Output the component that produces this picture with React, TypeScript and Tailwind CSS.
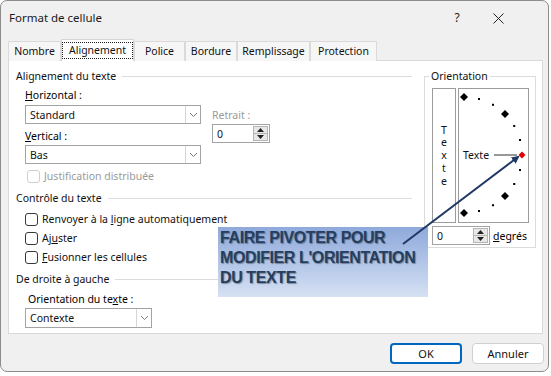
import React from "react";

const tabs = [
  { label: "Nombre", w: "w-[53px]" },
  { label: "Alignement", w: "w-[73px]", active: true },
  { label: "Police", w: "w-[51px]" },
  { label: "Bordure", w: "w-[52px]" },
  { label: "Remplissage", w: "w-[73px]" },
  { label: "Protection", w: "w-[67px]" },
];

function Chevron() {
  return (
    <svg width="9" height="6" viewBox="0 0 9 6">
      <path d="M1 1l3.5 3.5L8 1" fill="none" stroke="#7a7a7a" strokeWidth="1" />
    </svg>
  );
}

function Select({ value, width, height = "h-[19px]" }: { value: string; width: string; height?: string }) {
  return (
    <div className={`flex items-center border border-[#a3a3a3] bg-white ${height} ${width}`}>
      <span className="flex-1 pl-[4px] text-[#111]">{value}</span>
      <span className="flex h-full w-[15px] items-center justify-center border-l border-[#d6d6d6]">
        <Chevron />
      </span>
    </div>
  );
}

function Spinner({ value, width }: { value: string; width: string }) {
  return (
    <div className={`flex h-[19px] items-stretch border border-[#a3a3a3] bg-white ${width}`}>
      <span className="flex flex-1 items-center pl-[4px] text-[#111]">{value}</span>
      <span className="my-[1px] mr-[1px] flex w-[15px] flex-col border border-[#b5b5b5] bg-[#e8e8e8]">
        <span className="flex flex-1 items-center justify-center border-b border-[#b5b5b5]">
          <svg width="7" height="4" viewBox="0 0 7 4">
            <path d="M0 4L3.5 0L7 4Z" fill="#222" />
          </svg>
        </span>
        <span className="flex flex-1 items-center justify-center">
          <svg width="7" height="4" viewBox="0 0 7 4">
            <path d="M0 0L3.5 4L7 0Z" fill="#222" />
          </svg>
        </span>
      </span>
    </div>
  );
}

function Check({ children, disabled }: { children: React.ReactNode; disabled?: boolean }) {
  return (
    <div className="flex h-[16px] items-center gap-[4px]">
      <span
        className={`h-[13px] w-[13px] rounded-[3px] border bg-white ${disabled ? "border-[#cfcfcf]" : "border-[#3a3a3a]"}`}
      />
      <span className={disabled ? "text-[#9a9a9a]" : "text-[#111]"}>{children}</span>
    </div>
  );
}

function GroupTitle({ children, className = "" }: { children: React.ReactNode; className?: string }) {
  return (
    <div className={`flex h-[16px] items-center gap-[6px] ${className}`}>
      <span className="text-[#111]">{children}</span>
      <span className="h-px flex-1 bg-[#dcdcdc]" />
    </div>
  );
}

function Dial() {
  const angles = [90, 75, 60, 45, 30, 15, 0, -15, -30, -45, -60, -75, -90];
  return (
    <svg width="69" height="133" viewBox="1 1 69 133">
      {angles.map((a) => {
        const r = (a * Math.PI) / 180;
        const x = 6 + 58 * Math.cos(r);
        const y = 67 - 58 * Math.sin(r);
        if (a === 0) {
          return <path key={a} d={`M${x} ${y - 3.5}L${x + 3.5} ${y}L${x} ${y + 3.5}L${x - 3.5} ${y}Z`} fill="#e00000" />;
        }
        if (a % 45 === 0) {
          return <path key={a} d={`M${x} ${y - 4}L${x + 4} ${y}L${x} ${y + 4}L${x - 4} ${y}Z`} fill="#000" />;
        }
        return <rect key={a} x={x - 1} y={y - 1} width="2" height="2" fill="#000" />;
      })}
      <text x="5" y="71" fontSize="10.5" fill="#111" fontFamily="Noto Sans, sans-serif">
        Texte
      </text>
      <line x1="36" y1="67" x2="59" y2="67" stroke="#333" strokeWidth="1" />
    </svg>
  );
}

export default function App() {
  return (
    <div className="relative h-[376px] w-[551px] overflow-hidden bg-white font-['Noto_Sans',sans-serif] text-[10.5px] leading-[16px]">
      <div className="flex h-[372px] w-[549px] flex-col rounded-[7px] border border-[#8c8c8c] bg-[#f0f0f0]">
        {/* title bar */}
        <div className="flex h-[34px] items-center pl-[8px] text-[11.5px] text-[#1a1a1a]">
          <span className="flex-1">Format de cellule</span>
          <span className="w-[20px] text-center text-[12px]">?</span>
          <span className="ml-[24px] mr-[43px] flex w-[14px] justify-center">
            <svg width="11" height="11" viewBox="0 0 11 11">
              <path d="M0.5 0.5L10.5 10.5M10.5 0.5L0.5 10.5" stroke="#222" strokeWidth="1" />
            </svg>
          </span>
        </div>

        {/* tabs */}
        <div className="relative z-10 ml-[7px] mt-[4px] flex h-[22px] items-end">
          {tabs.map((t) =>
            t.active ? (
              <div
                key={t.label}
                className={`flex h-[22px] items-start justify-center border-x border-t border-[#d6d6d6] bg-white pt-[2px] ${t.w}`}
              >
                <span className="border border-dotted border-[#222] px-[6px] leading-[15px] text-[#111]">{t.label}</span>
              </div>
            ) : (
              <div
                key={t.label}
                className={`flex h-[20px] items-center justify-center border-x border-t border-[#dadada] bg-[#f6f6f6] pb-[1px] text-[#111] ${t.w}`}
              >
                {t.label}
              </div>
            ),
          )}
        </div>

        {/* panel */}
        <div className="ml-[7px] mr-[5px] -mt-[1px] flex h-[274px] border border-[#d9d9d9] bg-white pt-[7px]">
          <div className="flex w-[403px] flex-col pl-[7px]">
            <GroupTitle>Alignement du texte</GroupTitle>
            <div className="ml-[9px] mt-[3px] flex gap-[11px]">
              <div className="flex flex-col">
                <span className="h-[16px]">
                  <u>H</u>orizontal :
                </span>
                <div className="mt-[2px]">
                  <Select value="Standard" width="w-[176px]" />
                </div>
                <span className="mt-[4px] h-[16px]">
                  <u>V</u>ertical :
                </span>
                <div className="mt-[1px]">
                  <Select value="Bas" width="w-[176px]" />
                </div>
              </div>
              <div className="flex flex-col pt-[20px]">
                <span className="h-[16px] text-[#9a9a9a]">Retrait :</span>
                <div className="mt-[1px]">
                  <Spinner value="0" width="w-[58px]" />
                </div>
              </div>
            </div>
            <div className="ml-[11px] mt-[4px]">
              <Check disabled>Justification distribuée</Check>
            </div>

            <GroupTitle className="mt-[6px]">Contrôle du texte</GroupTitle>
            <div className="ml-[9px] mt-[5px] flex flex-col gap-[3px]">
              <Check>
                Renvoyer à la <u>l</u>igne automatiquement
              </Check>
              <Check>
                Aj<u>u</u>ster
              </Check>
              <Check>
                <u>F</u>usionner les cellules
              </Check>
            </div>

            <GroupTitle className="mt-[6px]">De droite à gauche</GroupTitle>
            <span className="ml-[12px] mt-[4px] h-[16px]">
              Orientation du te<u>x</u>te :
            </span>
            <div className="ml-[9px] mt-[1px]">
              <Select value="Contexte" width="w-[127px]" height="h-[20px]" />
            </div>
          </div>

          <fieldset className="ml-[12px] h-[180px] w-[112px] border border-[#dcdcdc] pl-[7px]">
            <legend className="ml-[-3px] px-[2px] text-[#111]">Orientation</legend>
            <div className="mt-[4px] flex gap-[2px]">
              <div className="flex h-[135px] w-[24px] flex-col items-center justify-center border border-[#9c9c9c] leading-[12.7px] text-[#111]">
                <span>T</span>
                <span>e</span>
                <span>x</span>
                <span>t</span>
                <span>e</span>
              </div>
              <div className="h-[135px] w-[71px] border border-[#9c9c9c]">
                <Dial />
              </div>
            </div>
            <div className="mt-[3px] flex items-center gap-[3px]">
              <Spinner value="0" width="w-[58px]" />
              <span>
                <u>d</u>egrés
              </span>
            </div>
          </fieldset>
        </div>

        {/* buttons */}
        <div className="mt-[9px] flex justify-end gap-[10px] pr-[4px] text-[11px] text-[#111]">
          <button className="flex h-[21px] w-[72px] items-center justify-center rounded-[4px] border-2 border-[#0067c0] bg-white">
            OK
          </button>
          <button className="flex h-[21px] w-[72px] items-center justify-center rounded-[4px] border border-[#d0d0d0] bg-white">
            Annuler
          </button>
        </div>
      </div>

      {/* annotation */}
      <div className="absolute left-[218px] top-[227px] h-[70px] w-[210px] bg-gradient-to-b from-[#8ea9db] to-[#d6e1f3] pl-[2px] pt-[1px] font-['Liberation_Sans',sans-serif] text-[16px] font-bold leading-[20px] tracking-[-0.4px] text-[#243f60] [text-shadow:1px_1px_1px_rgba(0,0,0,0.35)]">
        FAIRE PIVOTER POUR
        <br />
        MODIFIER L'ORIENTATION
        <br />
        DU TEXTE
      </div>
      <svg className="pointer-events-none absolute left-0 top-0" width="551" height="376">
        <defs>
          <marker id="ah" markerWidth="8" markerHeight="8" refX="6" refY="4" orient="auto" markerUnits="userSpaceOnUse">
            <path d="M0 0L8 4L0 8Z" fill="#1f3864" />
          </marker>
        </defs>
        <line x1="403" y1="244" x2="518" y2="157" stroke="#1f3864" strokeWidth="2" markerEnd="url(#ah)" />
      </svg>
    </div>
  );
}
